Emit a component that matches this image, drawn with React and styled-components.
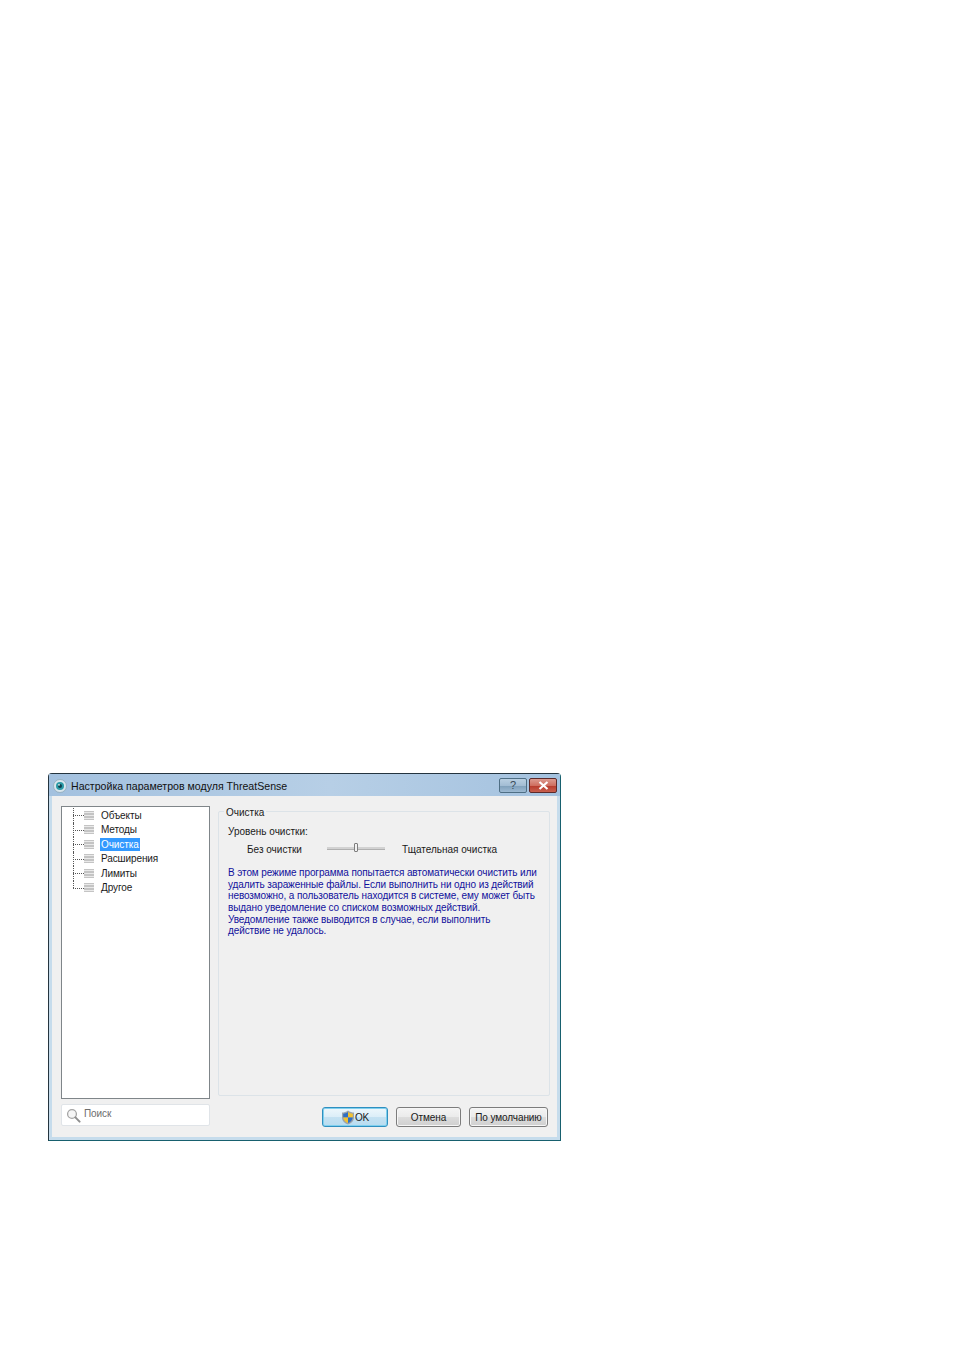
import React from 'react';
import styled, { createGlobalStyle } from 'styled-components';

const GlobalStyle = createGlobalStyle`
    html, body {
        margin: 0;
        padding: 0;
        background: #fff;
    }
    body {
        font-family: "Liberation Sans", Tahoma, sans-serif;
        font-size: 10px;
        color: #1a1a1a;
    }
`;

const treeItems = ['Объекты', 'Методы', 'Очистка', 'Расширения', 'Лимиты', 'Другое'];

const description = [
    'В этом режиме программа попытается автоматически очистить или',
    'удалить зараженные файлы. Если выполнить ни одно из действий',
    'невозможно, а пользователь находится в системе, ему может быть',
    'выдано уведомление со списком возможных действий.',
    'Уведомление также выводится в случае, если выполнить',
    'действие не удалось.',
];

const AppIcon = () => (
    <svg width="14" height="14" viewBox="0 0 14 14">
        <circle cx="7" cy="7" r="6.5" fill="#d8e6ee" stroke="#8fa9b8" strokeWidth="0.8" />
        <circle cx="7" cy="7" r="4" fill="#2a9aa6" />
        <circle cx="7" cy="7" r="2" fill="#0d3f4c" />
        <circle cx="6" cy="5.8" r="0.9" fill="#e8f6f8" />
    </svg>
);

const ItemIcon = () => (
    <svg width="10" height="9" viewBox="0 0 10 9">
        <rect width="10" height="9" fill="#c4c4c4" />
        <path d="M0 1.5H10M0 4.5H10M0 7.5H10" stroke="#e9e9e9" strokeWidth="1" />
    </svg>
);

const SearchIcon = () => (
    <svg width="15" height="15" viewBox="0 0 15 15" fill="none">
        <circle cx="6" cy="6" r="4.4" stroke="#a4a4a4" strokeWidth="1.3" fill="#f6f6f6" />
        <path d="M9.4 9.4L13.6 13.6" stroke="#8e8e8e" strokeWidth="2" strokeLinecap="round" />
    </svg>
);

const ShieldIcon = () => (
    <svg width="14" height="15" viewBox="0 0 14 15">
        <path d="M7 .5C5 2 3 2.6 1 2.6V7.5C1 11 4 13.4 7 14.5C10 13.4 13 11 13 7.5V2.6C11 2.6 9 2 7 .5Z" fill="#9aa3ad" />
        <path d="M7 2V7.4H2.2V3.7C4 3.6 5.6 3 7 2Z" fill="#2f6fc4" />
        <path d="M7 2C8.4 3 10 3.6 11.8 3.7V7.4H7Z" fill="#f2c230" />
        <path d="M7 7.4H2.2C2.5 10 4.6 12 7 13Z" fill="#f2c230" />
        <path d="M7 7.4H11.8C11.5 10 9.4 12 7 13Z" fill="#2f6fc4" />
    </svg>
);

const App = () => (
    <Page>
        <GlobalStyle />
        <Window>
            <TitleBar>
                <AppIcon />
                <TitleText>Настройка параметров модуля ThreatSense</TitleText>
                <HelpButton>?</HelpButton>
                <CloseButton>
                    <svg width="11" height="9" viewBox="0 0 11 9">
                        <path d="M1.5 1L9.5 8M9.5 1L1.5 8" stroke="#fff" strokeWidth="2.2" />
                    </svg>
                </CloseButton>
            </TitleBar>
            <Content>
                <LeftColumn>
                    <TreePanel>
                        {treeItems.map((item, index) => (
                            <TreeRow key={item}>
                                <Connector $last={index === treeItems.length - 1} />
                                <ItemIcon />
                                <TreeLabel $selected={item === 'Очистка'}>{item}</TreeLabel>
                            </TreeRow>
                        ))}
                    </TreePanel>
                    <SearchBox>
                        <SearchIcon />
                        <SearchText>Поиск</SearchText>
                    </SearchBox>
                </LeftColumn>
                <RightColumn>
                    <Group>
                        <Legend>Очистка</Legend>
                        <LevelLabel>Уровень очистки:</LevelLabel>
                        <SliderRow>
                            <SliderCaption>Без очистки</SliderCaption>
                            <Slider>
                                <SliderThumb />
                            </Slider>
                            <span>Тщательная очистка</span>
                        </SliderRow>
                        <Description>
                            {description.map((line) => (
                                <DescriptionLine key={line}>{line}</DescriptionLine>
                            ))}
                        </Description>
                    </Group>
                    <ButtonRow>
                        <Button $primary $width={66}>
                            <ShieldIcon />
                            OK
                        </Button>
                        <Button $width={65}>Отмена</Button>
                        <Button $width={79}>По умолчанию</Button>
                    </ButtonRow>
                </RightColumn>
            </Content>
        </Window>
    </Page>
);

const Page = styled.div`
    width: 954px;
    height: 1350px;
    padding: 773px 0 0 48px;
    box-sizing: border-box;
    background: #fff;
`;

const Window = styled.div`
    width: 513px;
    height: 368px;
    box-sizing: border-box;
    display: flex;
    flex-direction: column;
    background: #c6dcec;
    border: 1px solid #24343f;
    border-bottom-color: #17606e;
    border-right-color: #17606e;
    border-radius: 4px 4px 0 0;
`;

const TitleBar = styled.div`
    height: 22px;
    flex: none;
    display: flex;
    align-items: flex-start;
    padding: 5px 3px 0 4px;
    box-sizing: border-box;
    background: linear-gradient(to right, #a3c1df 0%, #b7cfe6 55%, #a4c2df 100%);
`;

const TitleText = styled.div`
    flex: 1;
    margin: 0 0 0 4px;
    font-size: 10.6px;
    line-height: 15px;
    color: #111;
`;

const HelpButton = styled.div`
    width: 28px;
    height: 15px;
    box-sizing: border-box;
    margin: -1px 2px 0 0;
    border: 1px solid #4f6f85;
    border-radius: 2px;
    background: linear-gradient(to bottom, #b9cfe2 0%, #a3bdd4 50%, #7f9fba 52%, #9dbad3 100%);
    color: #3a4a58;
    font-size: 11px;
    line-height: 13px;
    text-align: center;
`;

const CloseButton = styled.div`
    width: 28px;
    height: 15px;
    box-sizing: border-box;
    margin-top: -1px;
    display: flex;
    align-items: center;
    justify-content: center;
    border: 1px solid #5d2a2a;
    border-radius: 2px;
    background: linear-gradient(to bottom, #dd9b90 0%, #cf6f60 50%, #b73a2b 52%, #c8604f 100%);
`;

const Content = styled.div`
    flex: 1;
    display: flex;
    margin: 0 3px 3px;
    padding: 10px 7px 11px 9px;
    background: #f0f0f0;
    min-height: 0;
`;

const LeftColumn = styled.div`
    width: 149px;
    flex: none;
    display: flex;
    flex-direction: column;
    gap: 5px;
`;

const TreePanel = styled.div`
    height: 293px;
    flex: none;
    box-sizing: border-box;
    padding: 1px 0 0 11px;
    background: #fff;
    border: 1px solid #7f8589;
`;

const TreeRow = styled.div`
    height: 14.5px;
    display: flex;
    align-items: center;
    letter-spacing: -0.1px;
`;

const Connector = styled.div`
    position: relative;
    width: 11px;
    height: 100%;
    flex: none;

    &::before {
        content: '';
        position: absolute;
        left: 0;
        top: 0;
        height: ${(p) => (p.$last ? '50%' : '100%')};
        border-left: 1px dotted #555;
    }

    &::after {
        content: '';
        position: absolute;
        left: 0;
        right: 0;
        top: 50%;
        border-top: 1px dotted #555;
    }
`;

const TreeLabel = styled.span`
    margin-left: 6px;
    padding: 0 1px;
    line-height: 13px;
    color: ${(p) => (p.$selected ? '#fff' : '#1a1a1a')};
    background: ${(p) => (p.$selected ? '#3399ff' : 'transparent')};
`;

const SearchBox = styled.div`
    height: 22px;
    flex: none;
    box-sizing: border-box;
    display: flex;
    align-items: center;
    padding-left: 4px;
    background: #fff;
    border: 1px solid #e0e4e8;
    border-radius: 2px;
`;

const SearchText = styled.span`
    margin: 0 0 3px 3px;
    color: #6d6d6d;
    letter-spacing: -0.1px;
`;

const RightColumn = styled.div`
    flex: 1;
    min-width: 0;
    display: flex;
    flex-direction: column;
    margin-left: 8px;
    padding-top: 5px;
`;

const Group = styled.div`
    position: relative;
    height: 285px;
    flex: none;
    box-sizing: border-box;
    padding: 13px 8px 0 9px;
    border: 1px solid #dce3e8;
    border-radius: 2px;
`;

const Legend = styled.div`
    position: absolute;
    top: -5px;
    left: 5px;
    padding: 0 2px;
    line-height: 12px;
    background: #f0f0f0;
`;

const LevelLabel = styled.div`
    line-height: 13px;
`;

const SliderRow = styled.div`
    display: flex;
    align-items: center;
    height: 13px;
    margin: 5px 0 0 19px;
`;

const SliderCaption = styled.span`
    width: 80px;
    flex: none;
`;

const Slider = styled.div`
    position: relative;
    width: 58px;
    height: 2px;
    flex: none;
    margin: 0 17px 2px 0;
    background: #d2d2d2;
    border-bottom: 1px solid #b0b0b0;
`;

const SliderThumb = styled.div`
    position: absolute;
    left: 27px;
    top: -4px;
    width: 4px;
    height: 9px;
    box-sizing: border-box;
    background: #f2f2f2;
    border: 1px solid #7e7e7e;
    border-radius: 1px;
`;

const Description = styled.div`
    margin-top: 11px;
    color: #10109c;
    letter-spacing: -0.1px;
`;

const DescriptionLine = styled.div`
    height: 11.7px;
    line-height: 12px;
    white-space: nowrap;
`;

const ButtonRow = styled.div`
    display: flex;
    justify-content: flex-end;
    gap: 8px;
    margin: 11px 2px 0 0;
`;

const Button = styled.div`
    width: ${(p) => p.$width}px;
    height: 20px;
    flex: none;
    box-sizing: border-box;
    display: flex;
    align-items: center;
    justify-content: center;
    letter-spacing: -0.1px;
    border: 1px solid ${(p) => (p.$primary ? '#2f8fc0' : '#7c7c7c')};
    border-radius: 3px;
    background: ${(p) =>
        p.$primary
            ? 'linear-gradient(to bottom, #eef7fc 0%, #dceef8 48%, #c4e1f2 52%, #b8dcf0 100%)'
            : 'linear-gradient(to bottom, #f4f4f4 0%, #ebebeb 48%, #dcdcdc 52%, #cfcfcf 100%)'};
    box-shadow: inset 0 0 0 1px ${(p) => (p.$primary ? '#7fd0ee' : '#f6f6f6')};
`;

export default App;
